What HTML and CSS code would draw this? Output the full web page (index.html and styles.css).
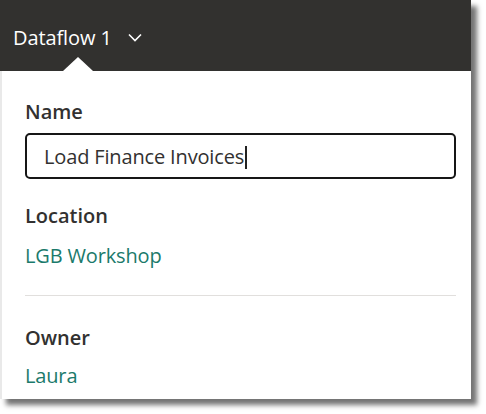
FILE: index.html
```html
<!DOCTYPE html>
<html>
<head>
<meta charset="utf-8">
<link rel="stylesheet" href="styles.css">
</head>
<body>
<div class="popup">
  <div class="header">
    <span class="title">Dataflow 1</span>
    <svg class="chevron" width="14" height="9" viewBox="0 0 14 9"><path d="M1 1.5 L7 7.5 L13 1.5" fill="none" stroke="#fff" stroke-width="1.6"/></svg>
    <span class="notch"></span>
  </div>
  <div class="panel">
    <div class="label">Name</div>
    <div class="input"><span class="input-text">Load Finance Invoices</span><span class="caret"></span></div>
    <div class="label label-loc">Location</div>
    <div class="value">LGB Workshop</div>
    <div class="divider"></div>
    <div class="label label-owner">Owner</div>
    <div class="value value-owner">Laura</div>
  </div>
</div>
</body>
</html>
```
FILE: styles.css
```css
html, body {
  margin: 0;
  padding: 0;
  background: #ffffff;
}
body {
  font-family: "Open Sans", "Noto Sans", sans-serif;
  width: 486px;
  height: 414px;
  overflow: hidden;
}
.popup {
  width: 471px;
  background: #e9e9e9;
  box-shadow: 6px 6px 5px rgba(0, 0, 0, 0.55);
}
.header {
  position: relative;
  height: 71px;
  background: #32312f;
  display: flex;
  align-items: flex-start;
  padding-left: 13px;
  box-sizing: border-box;
}
.title {
  color: #ffffff;
  font-size: 20px;
  line-height: 24px;
  margin-top: 26px;
  letter-spacing: -0.1px;
}
.chevron {
  margin-left: 16px;
  margin-top: 33px;
}
.notch {
  position: absolute;
  left: 63px;
  bottom: 0;
  width: 0;
  height: 0;
  border-left: 15px solid transparent;
  border-right: 15px solid transparent;
  border-bottom: 14px solid #ffffff;
}
.panel {
  margin-left: 2px;
  background: #ffffff;
  padding: 29px 15px 11px 23px;
  display: flex;
  flex-direction: column;
}
.label {
  font-size: 20px;
  line-height: 24px;
  font-weight: 600;
  color: #323130;
  letter-spacing: 0;
}
.input {
  margin-top: 9px;
  height: 46px;
  box-sizing: border-box;
  border: 2px solid #161616;
  border-radius: 5px;
  display: flex;
  align-items: center;
  padding-left: 17px;
  padding-top: 2px;
}
.input-text {
  font-size: 20px;
  line-height: 24px;
  color: #323130;
  letter-spacing: -0.15px;
}
.caret {
  width: 2px;
  height: 23px;
  background: #222;
  margin-left: 1px;
}
.label-loc {
  margin-top: 25px;
}
.value {
  margin-top: 16px;
  font-size: 20px;
  line-height: 24px;
  color: #1b7a6b;
  letter-spacing: -0.15px;
}
.divider {
  margin-top: 27px;
  height: 1px;
  background: #e1dfdd;
}
.label-owner {
  margin-top: 30px;
}
.value-owner {
  margin-top: 14px;
}
```
